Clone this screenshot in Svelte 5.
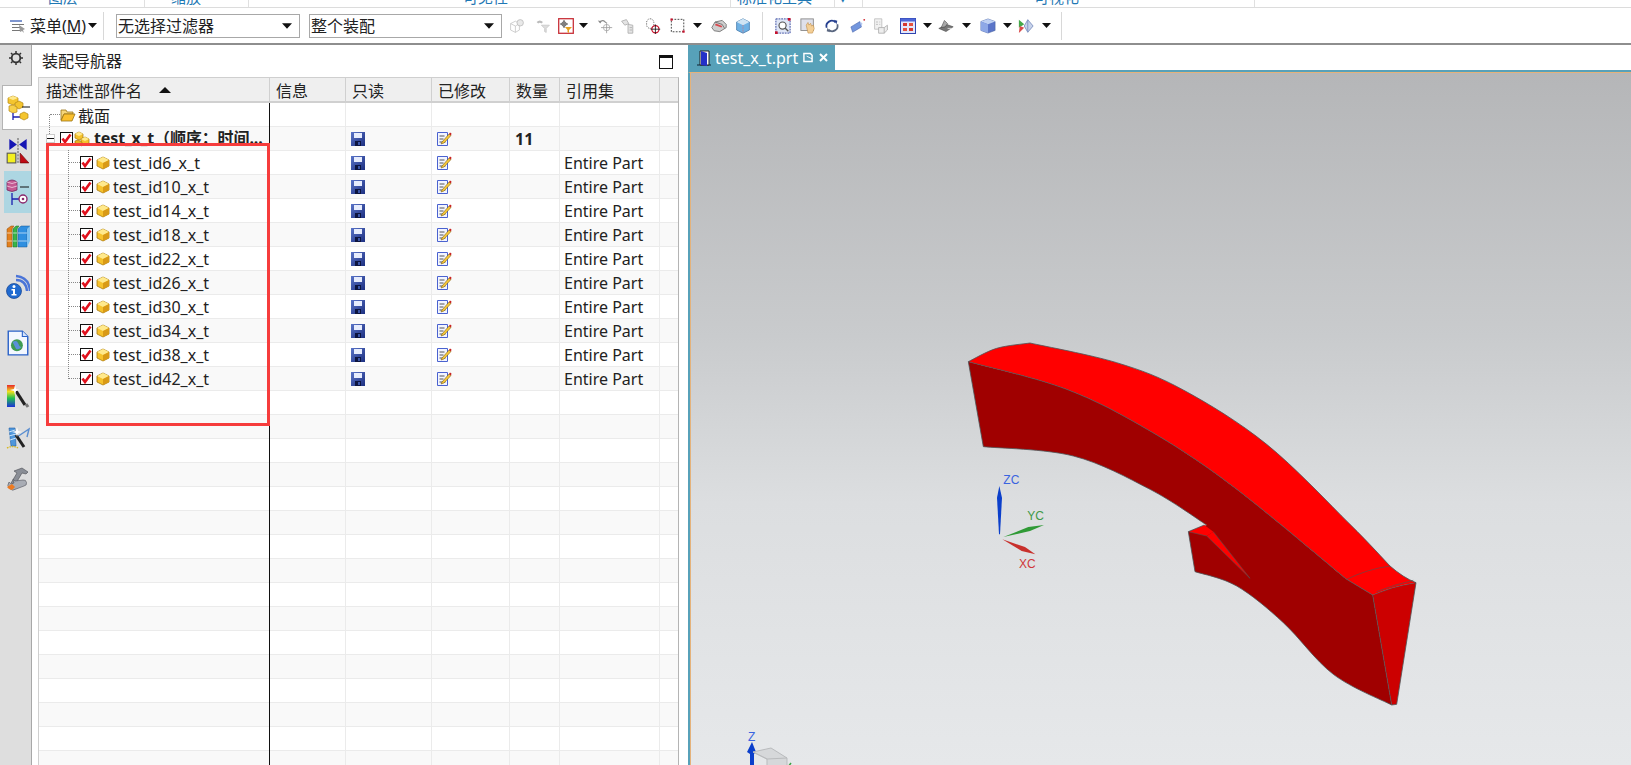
<script>
  const ribbon = [
    { w: 145, label: '图层', pad: 48 },
    { w: 104, label: '缩放', pad: 26 },
    { w: 482, label: '可见性', pad: 214 },
    { w: 104, label: '标准化工具', pad: 6 },
    { w: 28, label: '▾', pad: 4 },
    { w: 392, label: '可视化', pad: 171 },
    { w: 76, label: '', pad: 0 }
  ];
  const tools = [
    ['t-cube', 30], ['t-filter', 22], ['t-redbox', 23], ['drop', 12], ['t-undo', 32], ['t-chain', 14],
    ['t-target', 36], ['t-dash', 14], ['drop', 24], ['t-scan', 20], ['t-box', 28], ['sep', 10],
    ['t-fit', 32], ['t-hand', 18], ['t-rotate', 30], ['t-pen', 22], ['t-docs', 24], ['t-grid', 30],
    ['drop', 8], ['t-scope', 30], ['drop', 10], ['t-cube3', 34], ['drop', 4], ['t-arrow', 34],
    ['drop', 6], ['sep', 24]
  ];
  const sideTabs = [
    ['s-gear', 40, ''], ['s-tree', 45, 'active'], ['s-mirror', 41, ''], ['s-data', 42, 'hi'],
    ['s-books', 45, ''], ['s-info', 58, ''], ['s-doc', 54, ''], ['s-rainbow', 52, ''],
    ['s-wand', 32, ''], ['s-tools', 50, '']
  ];
  const ids = [6, 10, 14, 18, 22, 26, 30, 34, 38, 42];
  const columns = ['信息', '只读', '已修改', '数量', '引用集', ''];
  const blanks = Array.from({ length: 16 }, (_, i) => i);

  // Smooth curve through the traced points of the part's edges.
  function curve(pts, move = true) {
    let d = move ? `M${pts[0][0]} ${pts[0][1]}` : `L${pts[0][0]} ${pts[0][1]}`;
    for (let i = 0; i < pts.length - 1; i++) {
      const p0 = pts[i - 1] || pts[i];
      const p1 = pts[i];
      const p2 = pts[i + 1];
      const p3 = pts[i + 2] || p2;
      const c1 = [p1[0] + (p2[0] - p0[0]) / 6, p1[1] + (p2[1] - p0[1]) / 6];
      const c2 = [p2[0] - (p3[0] - p1[0]) / 6, p2[1] - (p3[1] - p1[1]) / 6];
      d += ` C${c1[0].toFixed(1)} ${c1[1].toFixed(1)} ${c2[0].toFixed(1)} ${c2[1].toFixed(1)} ${p2[0]} ${p2[1]}`;
    }
    return d;
  }
  const cornerTop = [[55, 122], [140, 82], [240, 66]];
  const topEdge = [[240, 66], [500, 125], [700, 207], [950, 370], [1200, 610], [1320, 735]];
  const midEdge = [[55, 122], [350, 205], [600, 330], [850, 497], [1190, 775]];
  const lowEdge = [[100, 377], [370, 405], [600, 505], [770, 612]];
  const tailEdge = [[735, 752], [860, 795], [1000, 905], [1150, 1060], [1325, 1152]];
  const rev = (a) => [...a].reverse();

  const sideFace = `${curve(midEdge)} L1268 822 L1325 1152 ${curve(rev(tailEdge), false)} L715 632 L770 612 ${curve(rev(lowEdge), false)} Z`;
  const topFace = `${curve(cornerTop)} ${curve(topEdge, false)} Q1360 770 1398 785 Q1330 795 1268 822 L1190 775 ${curve(rev(midEdge), false)} Z`;
  const outline = `${curve(cornerTop)} ${curve(topEdge, false)} Q1360 770 1398 785 L1340 1150 L1325 1152 ${curve(rev(tailEdge), false)} L715 632 L763 612`;
  const lowLine = `M55 122 L100 377 ${curve(lowEdge, false)}`;
  const midLine = `${curve(midEdge)} L1268 822 L1325 1152`;
</script>

<svg class="defs" aria-hidden="true">
  <defs>
    <linearGradient id="floppy" x1="0" y1="0" x2="1" y2="1"><stop offset="0" stop-color="#5a74c8" /><stop offset="1" stop-color="#1c2f80" /></linearGradient>
    <symbol id="cube" viewBox="0 0 14 14"><path d="M1 4 7 1l6 3v6l-6 3-6-3z" fill="#f6c22c" stroke="#a87b10" stroke-width=".8" /><path d="M1 4l6 3 6-3-6-3z" fill="#ffe98c" /><path d="M7 7v6l6-3V4z" fill="#d99a16" /></symbol>
    <symbol id="asm" viewBox="0 0 16 16"><path d="M5 1l4 2v4L5 9 1 7V3z" fill="#f6c22c" stroke="#a87b10" stroke-width=".7" /><path d="M1 3l4 2 4-2-4-2z" fill="#ffe98c" /><path d="M11 6l4 2v4l-4 2-4-2V8z" fill="#f6c22c" stroke="#a87b10" stroke-width=".7" /><path d="M7 8l4 2 4-2-4-2z" fill="#ffe98c" /><path d="M4 9l4 2v4l-4-2-3-1V10z" fill="#e8b020" stroke="#a87b10" stroke-width=".7" /></symbol>
    <symbol id="check" viewBox="0 0 13 13"><rect x=".5" y=".5" width="12" height="12" fill="#fff" stroke="#111" /><path d="M2.500 6.500 5 10l5.500-7.500" fill="none" stroke="#e0101c" stroke-width="2.600" /></symbol>
    <symbol id="folder" viewBox="0 0 16 14"><path d="M1 2h5l1 2h6v2H4L1 12z" fill="#f5d67a" stroke="#9b7414" stroke-width=".8" /><path d="M1 13 4 6h11l-3 7z" fill="#fbc02d" stroke="#9b7414" stroke-width=".8" /></symbol>
    <symbol id="save" viewBox="0 0 14 14"><path d="M0 0h14v14H0z" fill="url(#floppy)" /><rect x="3" y="1" width="8" height="5" fill="#e6ecfd" /><rect x="4" y="9" width="6" height="5" fill="#0c1440" /><rect x="7" y="10" width="2" height="3" fill="#3a55a8" /></symbol>
    <symbol id="note" viewBox="0 0 15 14"><path d="M.5.500h10v13H.5z" fill="#f2f5ff" stroke="#4a62d0" /><path d="M2.500 4h5M2.500 7h4M2.500 10h6" stroke="#555" /><path d="M5 10 12 2l2 1.500L7 11l-3 1z" fill="#f7c93b" stroke="#6a4b00" stroke-width=".5" /><path d="M12 2l1-1.500 1.500 1L14 3.500z" fill="#c82020" /></symbol>
    <symbol id="menu" viewBox="0 0 16 14"><path d="M0 1h12v2H0z" fill="#7f96cf" /><path d="M2 5h12v1H2zM2 8h10v1H2zM2 11h8v1H2z" fill="#777" /><path d="M9 6l6 4-2 1 1 3-2-2-2 1z" fill="#999" /></symbol>
    <symbol id="drop" viewBox="0 0 9 5"><path d="M0 0h9L4.500 5z" fill="#111" /></symbol>

    <symbol id="t-cube" viewBox="0 0 20 20"><path d="M2 7l6-3 5 3v8l-5 3-6-3z" fill="none" stroke="#c4c4c4" /><path d="M2 7l6 3 5-3M8 10v8" fill="none" stroke="#c4c4c4" /><circle cx="14" cy="6" r="4" fill="#e9e9e9" stroke="#bbb" /></symbol>
    <symbol id="t-filter" viewBox="0 0 20 20"><path d="M2 5q4-4 8 0l-2 2q-2-2-4 0z" fill="#bbb" /><path d="M8 9h10l-4 4v5l-2-1v-4z" fill="#ddd" stroke="#c8c8c8" /></symbol>
    <symbol id="t-redbox" viewBox="0 0 16 16"><rect x=".7" y=".7" width="14.600" height="14.600" fill="#fff" stroke="#c8323a" stroke-width="1.300" /><path d="M6 2v8M2 6h8" stroke="#555" /><circle cx="6" cy="6" r="2.200" fill="none" stroke="#555" /><path d="M7 9h7l-3 3v3l-1.500-1v-2z" fill="#e6a21f" /></symbol>
    <symbol id="t-undo" viewBox="0 0 20 20"><path d="M3 5q5-4 8 1" fill="none" stroke="#888" stroke-width="1.500" /><path d="M1 3l3 4 2-3z" fill="#888" /><circle cx="12" cy="12" r="4" fill="none" stroke="#aaa" /><path d="M12 5v14M5 12h14" stroke="#999" /></symbol>
    <symbol id="t-chain" viewBox="0 0 20 20"><path d="M2 4l6-2 3 5-5 2zM10 8l6 1v10h-6z" fill="#e4e4e4" stroke="#aaa" /><path d="M12 12h3M12 15h3" stroke="#aaa" /></symbol>
    <symbol id="t-target" viewBox="0 0 20 20"><rect x="2" y="1" width="9" height="12" rx="4.500" fill="none" stroke="#444" stroke-dasharray="1.500 1.500" /><circle cx="13" cy="14" r="4.500" fill="none" stroke="#c8102a" stroke-width="1.500" /><path d="M13 8v12M7 14h12" stroke="#111" /></symbol>
    <symbol id="t-dash" viewBox="0 0 18 18"><rect x="1.500" y="1.500" width="14" height="14" fill="none" stroke="#333" stroke-dasharray="2 1.500" /><rect x=".5" y=".5" width="2.500" height="2.500" fill="#c8102a" /><rect x="14" y="14" width="2.500" height="2.500" fill="#c8102a" /></symbol>
    <symbol id="t-scan" viewBox="0 0 20 20"><path d="M1 12 5 5l9-2 5 5v4l-8 5-7-1z" fill="#cfcfcf" stroke="#666" /><path d="M5 5l9 3 3 5" fill="none" stroke="#666" /><path d="M6 7l8 3-1 2-8-3z" fill="#d8484e" /></symbol>
    <symbol id="t-box" viewBox="0 0 20 20"><path d="M2 5l8-4 8 4v10l-8 4-8-4z" fill="#6fb1e4" stroke="#4a7fae" /><path d="M2 5l8 4 8-4-8-4z" fill="#cfe4f4" /><path d="M10 9v10" stroke="#e26b6b" stroke-dasharray="1 1" /></symbol>
    <symbol id="t-fit" viewBox="0 0 18 18"><rect x="1" y="1" width="16" height="16" fill="#dfe6f6" stroke="#2b3e9a" stroke-dasharray="2 1" /><circle cx="8.500" cy="8.500" r="4" fill="#fff" stroke="#555" stroke-width="1.300" /><path d="M11.500 11.500 15 15" stroke="#555" stroke-width="1.500" /><rect x="14.500" y="0" width="3" height="3" fill="#c8102a" /><rect x="0" y="15" width="3" height="3" fill="#c8102a" /></symbol>
    <symbol id="t-hand" viewBox="0 0 18 18"><rect x="1" y="1" width="14" height="13" fill="#dfe0ea" stroke="#888" /><path d="M7 8l2-3 1 3 2-2 1 3 2-1 1 4-2 5H9z" fill="#f4cf96" stroke="#b9843d" stroke-width=".6" /></symbol>
    <symbol id="t-rotate" viewBox="0 0 18 18"><path d="M3 11a6 6 0 0 1 10-6" fill="none" stroke="#26408f" stroke-width="2" /><path d="M15 7a6 6 0 0 1-10 6" fill="none" stroke="#5a6780" stroke-width="2" /><path d="M11 2l4 1-1 4z" fill="#26408f" /><path d="M7 16l-4-1 1-4z" fill="#5a6780" /></symbol>
    <symbol id="t-pen" viewBox="0 0 18 18"><path d="M1 10l10-6 2 6-10 6z" fill="#7396dd" stroke="#4460a8" stroke-width=".6" /><path d="M11 4l2 6 1-4z" fill="#b7cbf2" /><circle cx="16" cy="2" r="1" fill="#d0222a" /></symbol>
    <symbol id="t-docs" viewBox="0 0 18 20"><path d="M1 1h9v13H1z" fill="#f1f1f1" stroke="#bbb" /><path d="M3 5h2M7 5h1M3 8h2M7 8h1" stroke="#aaa" /><path d="M6 12h7v7H6zM13 12l4-3v6l-4 4" fill="#eee" stroke="#aaa" /></symbol>
    <symbol id="t-grid" viewBox="0 0 16 16"><rect x=".5" y=".5" width="15" height="15" fill="#e3e7fa" stroke="#2f44b0" /><rect x=".5" y=".5" width="15" height="3" fill="#4e67d8" /><rect x="3" y="5" width="4" height="3" fill="#d5382f" /><rect x="9" y="5" width="4" height="3" fill="#e5523f" /><rect x="3" y="10" width="4" height="3" fill="#e5523f" /><rect x="9" y="10" width="4" height="3" fill="#d5382f" /></symbol>
    <symbol id="t-scope" viewBox="0 0 20 18"><path d="M1 12l10-5 8 3-9 6z" fill="#777" stroke="#333" stroke-width=".6" /><path d="M4 11l4-9 4 4-3 4z" fill="#a9a9a9" stroke="#333" stroke-width=".6" /><path d="M12 12h5" stroke="#eee" /></symbol>
    <symbol id="t-cube3" viewBox="0 0 18 18"><path d="M1 4l8-3 8 3v10l-8 3-8-3z" fill="#5a74c8" stroke="#48629c" stroke-width=".6" /><path d="M1 4l8 3 8-3-8-3z" fill="#bed0f2" /><path d="M1 4l8 3v10l-8-3z" fill="#8ea8e6" /></symbol>
    <symbol id="t-arrow" viewBox="0 0 18 18"><path d="M1 2l6 5-6 4z" fill="#45a84a" /><path d="M1 17l1-8 5 2z" fill="#d94a4a" /><path d="M11 2l6 7-6 7-4-7z" fill="#c7d2ea" stroke="#7c8fc0" /><path d="M11 2v14" stroke="#7c8fc0" /></symbol>

    <symbol id="s-gear" viewBox="0 0 14 14"><circle cx="7" cy="7" r="4.300" fill="none" stroke="#333" stroke-width="1.800" /><path d="M7 0v2.500M7 11.500V14M0 7h2.500M11.500 7H14M2 2l1.500 1.500M10.500 10.500 12 12M12 2l-1.500 1.500M3.500 10.500 2 12" stroke="#333" stroke-width="1.500" /></symbol>
    <symbol id="s-tree" viewBox="0 0 24 26"><path d="M6 1l5 2v5l-5 2-5-2V3z" fill="#f4c52e" stroke="#b48816" stroke-width=".7" /><path d="M1 3l5 2 5-2-5-2z" fill="#ffe98c" /><path d="M12 6l4 2v4l-4 2-4-2V8z" fill="#f4c52e" stroke="#b48816" stroke-width=".7" /><path d="M6 10l4 2v5l-4 1-4-2v-5z" fill="#f7d14a" stroke="#b48816" stroke-width=".7" /><path d="M15 12h8" stroke="#111" /><path d="M6 18v7M6 22h7" stroke="#1b1fb0" stroke-width="1.300" /><path d="M17 17l4 2v4l-4 2-4-2v-4z" fill="#f4c52e" stroke="#b48816" stroke-width=".7" /></symbol>
    <symbol id="s-mirror" viewBox="0 0 22 24"><path d="M3 1l7 5-7 5zM19 1l-7 5 7 5z" fill="#1616b4" /><path d="M11 0v24" stroke="#111" stroke-width=".6" stroke-dasharray="2 1" /><rect x="1" y="14" width="8" height="9" fill="#f4f020" stroke="#555" /><path d="M13 14l8 9h-8z" fill="#c00a14" stroke="#600" stroke-width=".6" /></symbol>
    <symbol id="s-data" viewBox="0 0 24 26"><path d="M1 3q5-4 10 0v8q-5 3-10 0z" fill="#c45a92" stroke="#6e1f55" stroke-width=".7" /><path d="M1 3q5 3 10 0M1 7q5 3 10 0" fill="none" stroke="#f1d0e2" stroke-width=".8" /><path d="M14 8h9" stroke="#111" /><path d="M6 14v12M6 20h7" stroke="#1b1fb0" stroke-width="1.300" /><circle cx="17" cy="20" r="4" fill="#fff" stroke="#8a2a6e" stroke-width="1.400" /><circle cx="17" cy="20" r="1.300" fill="#8a2a6e" /></symbol>
    <symbol id="s-books" viewBox="0 0 24 22"><path d="M1 4l4-3h3l-2 3v18H1z" fill="#e2801e" stroke="#8a4d10" stroke-width=".5" /><path d="M7 4l3-3h3l-2 3v18H7z" fill="#38b54a" stroke="#1b6d2a" stroke-width=".5" /><path d="M12 4l3-3h9l-3 3v18h-9z" fill="#2f8fe0" stroke="#18548c" stroke-width=".5" /><path d="M12 8h9M12 16h9M1 8h5M1 16h5M7 8h4M7 16h4" stroke="#fff" stroke-opacity=".6" /><path d="M21 4l3-3v15l-3 6z" fill="#7fc2f2" /></symbol>
    <symbol id="s-info" viewBox="0 0 24 24"><path d="M10 5q10 0 11 11M10 1q13 1 14 15" fill="none" stroke="#4a74d8" stroke-width="2.400" /><circle cx="8" cy="16" r="7.500" fill="#1f6ad0" stroke="#123f8c" stroke-width=".7" /><circle cx="8" cy="11.500" r="1.500" fill="#fff" /><path d="M5.500 14H9v5h1.500v1.500h-5V19H7v-3.500H5.500z" fill="#fff" /></symbol>
    <symbol id="s-doc" viewBox="0 0 20 24"><path d="M1 1h13l5 5v17H1z" fill="#f3f7ff" stroke="#2a62c8" stroke-width="1.300" /><path d="M14 1v5h5" fill="#d6e4fb" stroke="#2a62c8" /><circle cx="9" cy="14" r="5.500" fill="#3e9b52" /><path d="M5 11q4-2 5 1t3 4q-3 3-5 1z" fill="#5a8fd8" /></symbol>
    <symbol id="s-rainbow" viewBox="0 0 24 24"><defs><linearGradient id="rb" x1="0" y1="0" x2="0" y2="1"><stop offset="0" stop-color="#e8282a" /><stop offset=".3" stop-color="#f0e020" /><stop offset=".6" stop-color="#22c050" /><stop offset="1" stop-color="#1c30d8" /></linearGradient></defs><rect x="1" y="1" width="8" height="22" fill="url(#rb)" /><path d="M10 7l9 14" stroke="#222" stroke-width="3.200" /><path d="M20 20l2 3" stroke="#777" stroke-width="3" /><path d="M9 1l1 4 4 1-4 1-1 4-1-4-4-1 4-1z" fill="#fff" /></symbol>
    <symbol id="s-wand" viewBox="0 0 24 24"><path d="M3 2h6l1 18H5z" fill="#4f97dc" stroke="#2360a4" stroke-width=".6" /><path d="M3 6l6-2M3 10l7-2M4 14l6-2" stroke="#cfe4f7" /><path d="M11 11 23 3l-2 8" fill="none" stroke="#5a8ed0" stroke-width="1.400" /><path d="M10 9l8 12" stroke="#222" stroke-width="3" /><path d="M1 22q6-3 11 0" fill="none" stroke="#d8b820" stroke-width="1.400" stroke-dasharray="1.500 1" /><path d="M11 1l1 4 4 1-4 1-1 4-1-4-4-1 4-1z" fill="#fff" /></symbol>
    <symbol id="s-tools" viewBox="0 0 24 24"><path d="M8 4l8-3 6 4-2 2-4-1-7 12-4-2 6-10z" fill="#8a8e96" stroke="#4a4c52" stroke-width=".6" /><path d="M3 15a5 5 0 0 0 7 7l8-3a3 3 0 0 0-1-6l-8 1-2-2 1 4-3 1z" fill="#a8acb4" stroke="#50525a" stroke-width=".6" /><path d="M1 20l5-3 3 3-3 3-3-1z" fill="#ee7a20" /></symbol>

    <symbol id="door" viewBox="0 0 14 16"><path d="M0 15h14" stroke="#123" /><path d="M3 1h9v14H3z" fill="#fff" stroke="#222" /><path d="M4 1l6 2v13l-6-1z" fill="#2430c8" /></symbol>
    <symbol id="tabdoc" viewBox="0 0 11 11"><path d="M1 1h7l2 2v7H1z" fill="none" stroke="#fff" stroke-width="1.600" /><path d="M4 4l6 3" stroke="#fff" /></symbol>
    <symbol id="close" viewBox="0 0 9 9"><path d="M1 1l7 7M8 1 1 8" stroke="#fff" stroke-width="2" /></symbol>
  </defs>
</svg>

<div class="app">
  <div class="ribbon">
    {#each ribbon as r}
      <div class="rib" style="width:{r.w}px;padding-left:{r.pad}px"><span>{r.label}</span></div>
    {/each}
  </div>

  <div class="toolbar">
    <svg class="menu-ic"><use href="#menu" /></svg>
    <span class="menu-txt">菜单(<u>M</u>)</span>
    <svg class="caret"><use href="#drop" /></svg>
    <i class="tsep first"></i>
    <div class="select s1"><span>无选择过滤器</span><svg class="caret lg"><use href="#drop" /></svg></div>
    <div class="select s2"><span>整个装配</span><svg class="caret lg"><use href="#drop" /></svg></div>
    <div class="tools">
      {#each tools as [name, w]}
        <div class="slot" style="width:{w}px">
          {#if name === 'sep'}
            <i class="tsep"></i>
          {:else if name === 'drop'}
            <svg class="caret"><use href="#drop" /></svg>
          {:else}
            <svg class="tool"><use href="#{name}" /></svg>
          {/if}
        </div>
      {/each}
    </div>
  </div>

  <div class="main">
    <aside class="side">
      {#each sideTabs as [name, h, cls]}
        <div class="stab {cls}" style="height:{h}px">
          <svg class={name === 's-gear' ? 'gear' : 'sic'}><use href="#{name}" /></svg>
        </div>
      {/each}
    </aside>

    <section class="panel">
      <div class="ptitle">
        <span>装配导航器</span>
        <i class="maxbox"></i>
      </div>
      <div class="table">
        <div class="row head">
          <div class="c c0">描述性部件名<i class="sort"></i></div>
          {#each columns as col, i}
            <div class="c c{i + 1}">{col}</div>
          {/each}
        </div>

        <div class="row">
          <div class="c c0 tree-section">
            <i class="dot-h"></i>
            <svg class="folder"><use href="#folder" /></svg>
            <span>截面</span>
          </div>
          {#each columns as _, i}<div class="c c{i + 1}"></div>{/each}
        </div>

        <div class="row alt">
          <div class="c c0 tree-root">
            <i class="minus"></i>
            <svg class="chk"><use href="#check" /></svg>
            <svg class="asm"><use href="#asm" /></svg>
            <b class="root-name">test_x_t（顺序：时间...</b>
          </div>
          <div class="c c1"></div>
          <div class="c c2"><svg class="save"><use href="#save" /></svg></div>
          <div class="c c3"><svg class="note"><use href="#note" /></svg></div>
          <div class="c c4"><b>11</b></div>
          <div class="c c5"></div>
          <div class="c c6"></div>
        </div>

        {#each ids as id, i}
          <div class="row" class:alt={i % 2 === 1}>
            <div class="c c0 tree-child" class:last={i === ids.length - 1}>
              <i class="dot-v"></i>
              <i class="dot-c"></i>
              <svg class="chk"><use href="#check" /></svg>
              <svg class="cube"><use href="#cube" /></svg>
              <span>test_id{id}_x_t</span>
            </div>
            <div class="c c1"></div>
            <div class="c c2"><svg class="save"><use href="#save" /></svg></div>
            <div class="c c3"><svg class="note"><use href="#note" /></svg></div>
            <div class="c c4"></div>
            <div class="c c5">Entire Part</div>
            <div class="c c6"></div>
          </div>
        {/each}

        {#each blanks as b}
          <div class="row" class:alt={b % 2 === 1}>
            <div class="c c0"></div>
            {#each columns as _, i}<div class="c c{i + 1}"></div>{/each}
          </div>
        {/each}

        <i class="vline"></i>
        <i class="redbox"></i>
      </div>
    </section>

    <section class="view">
      <div class="tabbar">
        <div class="vtab">
          <svg class="door"><use href="#door" /></svg>
          <span>test_x_t.prt</span>
          <svg class="tabdoc"><use href="#tabdoc" /></svg>
          <svg class="close"><use href="#close" /></svg>
        </div>
      </div>
      <div class="canvas">
        <svg class="model" viewBox="0 0 1440 1200">
          <path d={sideFace} fill="#a00000" />
          <path d={topFace} fill="#ff0000" />
          <path d="M1268 822 Q1330 795 1398 785 L1340 1150 L1325 1152 Z" fill="#cc0000" />
          <path d="M715 632 L763 612 L790 632 L770 645 Z" fill="#ff0000" />
          <path d="M770 645 L790 632 L900 772 Z" fill="#ff0000" />
          <g fill="none" stroke="#4c5658" stroke-width="2.400">
            <path d={outline} />
            <path d={lowLine} />
            <path d={midLine} />
            <path d="M1190 775 Q1250 745 1320 735 M1268 822 Q1330 795 1398 785 M1280 812 Q1335 790 1390 778" stroke-width="1.800" />
            <path d="M715 632 L770 645 L900 772 M790 632 L900 772" stroke-width="1.800" />
          </g>
          <path d="M148 495 L156 530 L150 640 L147 640 L141 530 Z" fill="#0b3fcb" />
          <path d="M160 648 L235 618 L282 612 L240 630 Z" fill="#2f9a36" />
          <path d="M157 655 L225 678 L256 700 L215 690 Z" fill="#c8302c" />
          <text x="160" y="490" class="lab z">ZC</text>
          <text x="232" y="597" class="lab y">YC</text>
          <text x="207" y="740" class="lab x">XC</text>
        </svg>

        <svg class="wcs" viewBox="0 0 100 55">
          <text x="28" y="29" class="wlab">Z</text>
          <path d="M32 30 L36 40 L34 42 L34 55 L30 55 L30 42 L27 40 Z" fill="#0b3fcb" />
          <path d="M33 40 L51 36 L67 46 L67 55 L47 55 L47 47 Z" fill="#d6d8da" stroke="#b9bbbd" />
          <path d="M33 40 L47 47 L67 46" fill="none" stroke="#b9bbbd" />
          <path d="M68 55 L71 51" stroke="#38a040" stroke-width="1.500" />
        </svg>
      </div>
    </section>
  </div>
</div>

<style>
  :global(body) { margin: 0; background: #fff; }
  .defs { position: absolute; width: 0; height: 0; }
  .app {
    width: 1631px; height: 765px; overflow: hidden; display: flex; flex-direction: column;
    font-family: "Noto Sans", "Noto Sans CJK SC", sans-serif; font-size: 16px; color: #222; background: #fff;
  }
  .ribbon { height: 7px; display: flex; border-bottom: 1px solid #dcdcdc; flex: none; }
  .rib { box-sizing: border-box; height: 7px; overflow: hidden; border-right: 1px solid #e0e0e0; color: #1f78b4; font-size: 15px; line-height: 1; white-space: nowrap; }
  .rib span { display: block; margin-top: -10px; }
  .rib:last-child { border-right: 0; }

  .toolbar { height: 35px; flex: none; display: flex; align-items: center; border-bottom: 2px solid #8e8e8e; box-sizing: content-box; }
  .menu-ic { width: 16px; height: 14px; margin-left: 10px; flex: none; }
  .menu-txt { margin-left: 4px; width: 55px; white-space: nowrap; line-height: 24px; }
  .caret { width: 9px; height: 5px; flex: none; }
  .toolbar > .caret { margin-left: 3px; }
  .tsep { display: block; width: 1px; height: 28px; background: #d8d8d8; flex: none; }
  .tsep.first { margin-left: 6px; margin-right: 12px; }
  .select { box-sizing: border-box; height: 24px; border: 1px solid #a8a8a8; display: flex; align-items: center; justify-content: space-between; padding: 0 7px 0 1px; flex: none; line-height: 22px; }
  .s1 { width: 184px; margin-right: 9px; }
  .s2 { width: 193px; }
  .caret.lg { width: 10px; height: 6px; }
  .tools { display: flex; align-items: center; height: 28px; }
  .slot { display: flex; align-items: center; justify-content: center; flex: none; height: 28px; }
  .tool { width: 16px; height: 16px; flex: none; }

  .main { flex: 1; display: flex; min-height: 0; }
  .side { width: 32px; flex: none; background: #dedede; border-right: 1px solid #a8a8a8; box-sizing: border-box; display: flex; flex-direction: column; }
  .stab { flex: none; display: flex; align-items: center; justify-content: center; box-sizing: border-box; margin-left: 2px; padding-left: 3px; }
  .stab:first-child { align-items: flex-start; padding: 6px 0 0; margin-left: 0; }
  .stab.active { background: #fff; border: 1px solid #b4b4b4; border-right: 0; margin-right: -1px; position: relative; }
  .stab.hi { background: #add6e2; margin-left: 4px; padding-left: 0; }
  .sic { width: 24px; height: 26px; flex: none; }
  .gear { width: 14px; height: 14px; flex: none; }

  .panel { width: 656px; flex: none; display: flex; flex-direction: column; min-height: 0; box-sizing: border-box; padding-left: 6px; }
  .ptitle { height: 32px; flex: none; display: flex; align-items: center; justify-content: space-between; padding: 0 6px 3px 4px; box-sizing: border-box; width: 641px; }
  .maxbox { display: block; width: 14px; height: 14px; box-sizing: border-box; border: 1px solid #111; border-top-width: 3px; margin-top: 5px; }
  .table { position: relative; flex: 1; min-height: 0; overflow: hidden; width: 641px; border-left: 1px solid #cfcfcf; border-right: 1px solid #b4b4b4; border-top: 1px solid #cfcfcf; box-sizing: border-box; }

  .row { display: flex; height: 24px; box-sizing: border-box; border-bottom: 1px solid #ebebeb; }
  .row.alt { background: #f9f9f9; }
  .row.head { height: 25px; background: #efefef; border-bottom: 2px solid #d0d0d0; }
  .c { box-sizing: border-box; flex: none; height: 100%; border-right: 1px solid #ebebeb; display: flex; align-items: center; padding-left: 5px; white-space: nowrap; position: relative; }
  .head .c { border-right-color: #d0d0d0; padding-left: 6px; }
  .head .c0 { padding-left: 7px; }
  .c0 { width: 231px; padding-left: 6px; }
  .c1 { width: 76px; }
  .c2 { width: 86px; }
  .c3 { width: 78px; }
  .c4 { width: 50px; }
  .c5 { width: 100px; padding-left: 4px; }
  .c6 { width: 18px; border-right: 0; }
  .sort { width: 0; height: 0; border-left: 6px solid transparent; border-right: 6px solid transparent; border-bottom: 6px solid #111; margin-left: 17px; }
  .save { width: 14px; height: 14px; }
  .note { width: 15px; height: 14px; }

  .tree-section { padding-left: 11px; }
  .dot-h { display: block; width: 10px; border-top: 1px dotted #888; flex: none; }
  .folder { width: 16px; height: 14px; margin-right: 2px; flex: none; }
  .tree-section::before { content: ""; position: absolute; left: 10px; top: 12px; bottom: -10px; border-left: 1px dotted #888; }
  .tree-root { padding-left: 7px; overflow: hidden; }
  .minus { display: block; box-sizing: border-box; width: 9px; height: 9px; margin-right: 5px; flex: none; background: linear-gradient(#111, #111) center / 7px 1px no-repeat #fff; border: 1px solid #ccc; }
  .chk { width: 13px; height: 13px; flex: none; }
  .asm { width: 16px; height: 16px; margin: 0 4px 0 1px; flex: none; }
  .root-name { font-weight: 700; white-space: nowrap; margin-top: -3px; letter-spacing: -0.1px; }
  .tree-child { padding-left: 29px; }
  .dot-v { position: absolute; left: 29px; top: -1px; bottom: -1px; border-left: 1px dotted #888; }
  .tree-child.last .dot-v { bottom: 50%; }
  .dot-c { display: block; width: 12px; border-top: 1px dotted #888; flex: none; }
  .tree-child .chk { margin-right: 3px; }
  .cube { width: 14px; height: 14px; margin-right: 3px; flex: none; }
  b { font-weight: 700; }

  .vline { position: absolute; left: 230px; top: 25px; bottom: 0; width: 1px; background: #111; }
  .redbox { position: absolute; left: 7px; top: 65px; width: 224px; height: 283px; box-sizing: border-box; border: 3px solid #f63c3c; }

  .view { flex: 1; min-width: 0; display: flex; flex-direction: column; }
  .tabbar { height: 25px; flex: none; border-bottom: 2px solid #57a1b9; }
  .vtab { width: 147px; height: 25px; background: #57a1b9; color: #fff; display: flex; align-items: center; box-sizing: border-box; padding-left: 9px; }
  .door { width: 14px; height: 16px; margin-right: 4px; flex: none; }
  .tabdoc { width: 10px; height: 11px; margin-left: 5px; flex: none; }
  .close { width: 9px; height: 9px; margin-left: 6px; flex: none; }
  .canvas { flex: 1; position: relative; overflow: hidden; min-height: 0; box-sizing: border-box; border-left: 2px solid #57a1b9; border-top: 1px solid #e5b27a; background: linear-gradient(#b5b6b8 0%, #c9cbcd 38%, #dcdee0 62%, #e6e8ea 100%); box-shadow: inset 1px 0 0 #e5b27a; }
  .model { position: absolute; left: 260px; top: 248px; width: 480px; height: 400px; }
  .lab { font-family: "Liberation Sans", sans-serif; font-size: 36px; }
  .lab.z { fill: #3a64e0; }
  .lab.y { fill: #3f9a48; }
  .lab.x { fill: #d0383a; }
  .wcs { position: absolute; left: 30px; top: 639px; width: 100px; height: 55px; }
  .wlab { font-family: "Liberation Sans", sans-serif; font-size: 12px; fill: #3a64e0; }
</style>
